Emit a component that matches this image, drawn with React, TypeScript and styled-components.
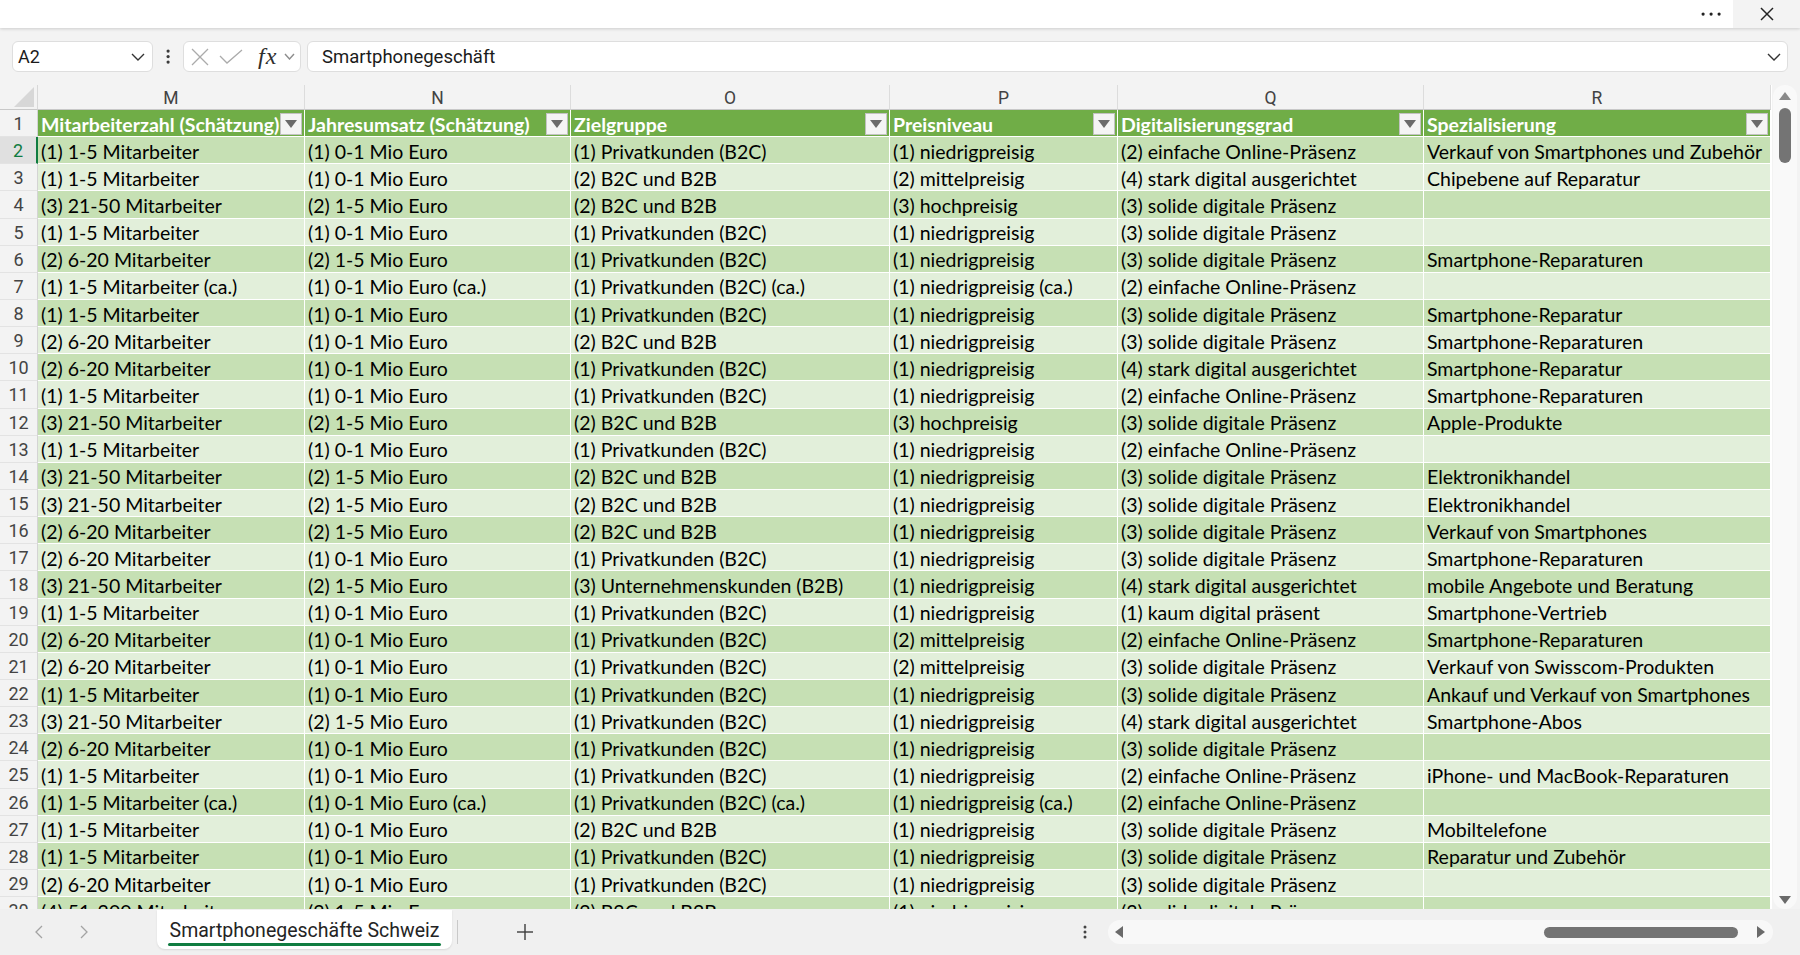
import React from "react";
import styled, { createGlobalStyle } from "styled-components";

const LETTERS = ["M", "N", "O", "P", "Q", "R"];
const HEADINGS = [
  "Mitarbeiterzahl (Schätzung)",
  "Jahresumsatz (Schätzung)",
  "Zielgruppe",
  "Preisniveau",
  "Digitalisierungsgrad",
  "Spezialisierung",
];

// rows 2..30 of the sheet, columns M..R
const ROWS: string[][] = [
  ["(1) 1-5 Mitarbeiter", "(1) 0-1 Mio Euro", "(1) Privatkunden (B2C)", "(1) niedrigpreisig", "(2) einfache Online-Präsenz", "Verkauf von Smartphones und Zubehör"],
  ["(1) 1-5 Mitarbeiter", "(1) 0-1 Mio Euro", "(2) B2C und B2B", "(2) mittelpreisig", "(4) stark digital ausgerichtet", "Chipebene auf Reparatur"],
  ["(3) 21-50 Mitarbeiter", "(2) 1-5 Mio Euro", "(2) B2C und B2B", "(3) hochpreisig", "(3) solide digitale Präsenz", ""],
  ["(1) 1-5 Mitarbeiter", "(1) 0-1 Mio Euro", "(1) Privatkunden (B2C)", "(1) niedrigpreisig", "(3) solide digitale Präsenz", ""],
  ["(2) 6-20 Mitarbeiter", "(2) 1-5 Mio Euro", "(1) Privatkunden (B2C)", "(1) niedrigpreisig", "(3) solide digitale Präsenz", "Smartphone-Reparaturen"],
  ["(1) 1-5 Mitarbeiter (ca.)", "(1) 0-1 Mio Euro (ca.)", "(1) Privatkunden (B2C) (ca.)", "(1) niedrigpreisig (ca.)", "(2) einfache Online-Präsenz", ""],
  ["(1) 1-5 Mitarbeiter", "(1) 0-1 Mio Euro", "(1) Privatkunden (B2C)", "(1) niedrigpreisig", "(3) solide digitale Präsenz", "Smartphone-Reparatur"],
  ["(2) 6-20 Mitarbeiter", "(1) 0-1 Mio Euro", "(2) B2C und B2B", "(1) niedrigpreisig", "(3) solide digitale Präsenz", "Smartphone-Reparaturen"],
  ["(2) 6-20 Mitarbeiter", "(1) 0-1 Mio Euro", "(1) Privatkunden (B2C)", "(1) niedrigpreisig", "(4) stark digital ausgerichtet", "Smartphone-Reparatur"],
  ["(1) 1-5 Mitarbeiter", "(1) 0-1 Mio Euro", "(1) Privatkunden (B2C)", "(1) niedrigpreisig", "(2) einfache Online-Präsenz", "Smartphone-Reparaturen"],
  ["(3) 21-50 Mitarbeiter", "(2) 1-5 Mio Euro", "(2) B2C und B2B", "(3) hochpreisig", "(3) solide digitale Präsenz", "Apple-Produkte"],
  ["(1) 1-5 Mitarbeiter", "(1) 0-1 Mio Euro", "(1) Privatkunden (B2C)", "(1) niedrigpreisig", "(2) einfache Online-Präsenz", ""],
  ["(3) 21-50 Mitarbeiter", "(2) 1-5 Mio Euro", "(2) B2C und B2B", "(1) niedrigpreisig", "(3) solide digitale Präsenz", "Elektronikhandel"],
  ["(3) 21-50 Mitarbeiter", "(2) 1-5 Mio Euro", "(2) B2C und B2B", "(1) niedrigpreisig", "(3) solide digitale Präsenz", "Elektronikhandel"],
  ["(2) 6-20 Mitarbeiter", "(2) 1-5 Mio Euro", "(2) B2C und B2B", "(1) niedrigpreisig", "(3) solide digitale Präsenz", "Verkauf von Smartphones"],
  ["(2) 6-20 Mitarbeiter", "(1) 0-1 Mio Euro", "(1) Privatkunden (B2C)", "(1) niedrigpreisig", "(3) solide digitale Präsenz", "Smartphone-Reparaturen"],
  ["(3) 21-50 Mitarbeiter", "(2) 1-5 Mio Euro", "(3) Unternehmenskunden (B2B)", "(1) niedrigpreisig", "(4) stark digital ausgerichtet", "mobile Angebote und Beratung"],
  ["(1) 1-5 Mitarbeiter", "(1) 0-1 Mio Euro", "(1) Privatkunden (B2C)", "(1) niedrigpreisig", "(1) kaum digital präsent", "Smartphone-Vertrieb"],
  ["(2) 6-20 Mitarbeiter", "(1) 0-1 Mio Euro", "(1) Privatkunden (B2C)", "(2) mittelpreisig", "(2) einfache Online-Präsenz", "Smartphone-Reparaturen"],
  ["(2) 6-20 Mitarbeiter", "(1) 0-1 Mio Euro", "(1) Privatkunden (B2C)", "(2) mittelpreisig", "(3) solide digitale Präsenz", "Verkauf von Swisscom-Produkten"],
  ["(1) 1-5 Mitarbeiter", "(1) 0-1 Mio Euro", "(1) Privatkunden (B2C)", "(1) niedrigpreisig", "(3) solide digitale Präsenz", "Ankauf und Verkauf von Smartphones"],
  ["(3) 21-50 Mitarbeiter", "(2) 1-5 Mio Euro", "(1) Privatkunden (B2C)", "(1) niedrigpreisig", "(4) stark digital ausgerichtet", "Smartphone-Abos"],
  ["(2) 6-20 Mitarbeiter", "(1) 0-1 Mio Euro", "(1) Privatkunden (B2C)", "(1) niedrigpreisig", "(3) solide digitale Präsenz", ""],
  ["(1) 1-5 Mitarbeiter", "(1) 0-1 Mio Euro", "(1) Privatkunden (B2C)", "(1) niedrigpreisig", "(2) einfache Online-Präsenz", "iPhone- und MacBook-Reparaturen"],
  ["(1) 1-5 Mitarbeiter (ca.)", "(1) 0-1 Mio Euro (ca.)", "(1) Privatkunden (B2C) (ca.)", "(1) niedrigpreisig (ca.)", "(2) einfache Online-Präsenz", ""],
  ["(1) 1-5 Mitarbeiter", "(1) 0-1 Mio Euro", "(2) B2C und B2B", "(1) niedrigpreisig", "(3) solide digitale Präsenz", "Mobiltelefone"],
  ["(1) 1-5 Mitarbeiter", "(1) 0-1 Mio Euro", "(1) Privatkunden (B2C)", "(1) niedrigpreisig", "(3) solide digitale Präsenz", "Reparatur und Zubehör"],
  ["(2) 6-20 Mitarbeiter", "(1) 0-1 Mio Euro", "(1) Privatkunden (B2C)", "(1) niedrigpreisig", "(3) solide digitale Präsenz", ""],
  ["(4) 51-200 Mitarbeiter", "(2) 1-5 Mio Euro", "(2) B2C und B2B", "(1) niedrigpreisig", "(3) solide digitale Präsenz", ""],
];

const GlobalStyle = createGlobalStyle`
  * { box-sizing: border-box; }
  html, body { margin: 0; padding: 0; }
  body {
    width: 1800px;
    height: 955px;
    overflow: hidden;
    background: #f3f3f3;
    font-family: Roboto, "Open Sans", sans-serif;
    color: #242424;
  }
`;

const Window = styled.div`
  width: 1800px;
  height: 955px;
  display: flex;
  flex-direction: column;
  background: #f3f3f3;
`;

/* ---------- title bar ---------- */

const TitleBar = styled.header`
  height: 28px;
  flex: none;
  background: #fff;
  box-shadow: 0 1px 3px rgba(0, 0, 0, 0.16);
  display: flex;
  justify-content: flex-end;
  position: relative;
  z-index: 2;
`;

const TitleButton = styled.div<{ $shade?: boolean }>`
  width: ${(p) => (p.$shade ? 67 : 44)}px;
  height: 100%;
  background: ${(p) => (p.$shade ? "#f3f3f3" : "transparent")};
  display: flex;
  align-items: center;
  justify-content: center;
`;

/* ---------- formula bar ---------- */

const FormulaRow = styled.div`
  height: 57px;
  flex: none;
  display: flex;
  align-items: flex-start;
  padding: 13px 12px 0 12px;
`;

const Box = styled.div`
  height: 31px;
  background: #fff;
  border: 1px solid #dedede;
  border-radius: 6px;
  display: flex;
  align-items: center;
`;

const NameBox = styled(Box)`
  width: 141px;
  justify-content: space-between;
  padding: 0 7px 0 5px;
  font-size: 18px;
  color: #1b1b1b;
`;

const Grip = styled.div`
  width: 30px;
  height: 31px;
  display: flex;
  align-items: center;
  justify-content: center;
`;

const FxGroup = styled(Box)`
  width: 118px;
  padding-left: 7px;
  gap: 10px;
`;

const FxLabel = styled.span`
  font-family: "Liberation Serif", serif;
  font-style: italic;
  font-size: 24px;
  color: #2e2e2e;
  margin-left: 5px;
  margin-right: -3px;
  letter-spacing: 1px;
`;

const FormulaInput = styled(Box)`
  flex: 1;
  margin-left: 6px;
  justify-content: space-between;
  padding: 0 6px 0 14px;
  font-size: 18.5px;
  color: #1b1b1b;
`;

/* ---------- sheet ---------- */

const TEMPLATE = "38px 267px 266px 319px 228px 306px 347px";

const Workspace = styled.div`
  flex: 1;
  min-height: 0;
  display: flex;
`;

const Sheet = styled.div`
  width: 1772px;
  overflow: hidden;
  background: #fff;
  display: flex;
  flex-direction: column;
`;

const GridRow = styled.div<{ $height: number }>`
  display: grid;
  grid-template-columns: ${TEMPLATE};
  height: ${(p) => p.$height}px;
  flex: none;
`;

const Corner = styled.div`
  background: #f3f3f3;
  border-right: 1px solid #d8d8d8;
  border-bottom: 1px solid #c8c8c8;
  position: relative;
`;

const ColumnLetter = styled.div`
  background: #f3f3f3;
  border-right: 1px solid #dcdcdc;
  border-bottom: 1px solid #c8c8c8;
  display: flex;
  align-items: center;
  justify-content: center;
  padding-top: 1px;
  font-size: 17.5px;
  color: #424242;
`;

const RowNumber = styled.div<{ $selected?: boolean }>`
  background: ${(p) => (p.$selected ? "#e0e0e0" : "#f3f3f3")};
  color: ${(p) => (p.$selected ? "#107c41" : "#444")};
  border-bottom: 1px solid #e3e3e3;
  border-right: ${(p) => (p.$selected ? "2px solid #107c41" : "1px solid #d4d4d4")};
  display: flex;
  align-items: center;
  justify-content: center;
  padding-top: 1px;
  font-size: 18px;
`;

const BANDS = {
  head: "#70ad47",
  dark: "#c6e0b4",
  light: "#e2efda",
};

const Cell = styled.div<{ $band: keyof typeof BANDS }>`
  background: ${(p) => BANDS[p.$band]};
  border-right: 1px solid #fff;
  border-bottom: 1px solid #fff;
  padding: 2px 2px 0 3px;
  display: flex;
  align-items: center;
  justify-content: space-between;
  font-family: Lato, "Open Sans", sans-serif;
  font-size: 19.5px;
  font-weight: ${(p) => (p.$band === "head" ? 700 : 400)};
  color: ${(p) => (p.$band === "head" ? "#fff" : "#000")};
  white-space: nowrap;
  overflow: hidden;
`;

const FilterButton = styled.div`
  width: 22px;
  height: 22px;
  flex: none;
  background: #f4f4f4;
  border: 1px solid #c2c2c2;
  display: flex;
  align-items: center;
  justify-content: center;
`;

/* ---------- scrollbars ---------- */

const VScroll = styled.div`
  width: 28px;
  flex: none;
  padding: 0 3px 0 1px;
`;

const VTrack = styled.div`
  height: 100%;
  background: #f9f9f9;
  border-radius: 12px;
  display: flex;
  flex-direction: column;
  align-items: center;
  padding: 7px 0 5px;
`;

const VThumb = styled.div`
  width: 12px;
  height: 55px;
  margin-top: 8px;
  border-radius: 6px;
  background: #747474;
`;

const Spacer = styled.div`
  flex: 1;
`;

/* ---------- sheet tabs ---------- */

const TabBar = styled.footer`
  height: 46px;
  flex: none;
  background: #f0f0f0;
  display: flex;
  align-items: center;
  padding-left: 16px;
`;

const NavButton = styled.div`
  width: 45px;
  height: 30px;
  display: flex;
  align-items: center;
  justify-content: center;
`;

const SheetTab = styled.div`
  align-self: flex-start;
  margin: 1px 0 0 51px;
  width: 295px;
  height: 39px;
  background: #fff;
  border-radius: 0 0 8px 8px;
  box-shadow: 0 1px 2px rgba(0, 0, 0, 0.1);
  display: flex;
  flex-direction: column;
  align-items: center;
  justify-content: center;
  padding-top: 5px;
  font-size: 19.5px;
  color: #242424;
`;

const TabUnderline = styled.span`
  width: 273px;
  height: 3px;
  margin-top: 1px;
  border-radius: 2px;
  background: #107c41;
`;

const Divider = styled.div`
  width: 1px;
  height: 24px;
  margin-left: 5px;
  background: #c9c9c9;
`;

const AddButton = styled.div`
  width: 44px;
  height: 30px;
  margin-left: 45px;
  display: flex;
  align-items: center;
  justify-content: center;
`;

const MoreButton = styled.div`
  width: 20px;
  height: 24px;
  margin-right: 13px;
  display: flex;
  align-items: center;
  justify-content: center;
`;

const HTrack = styled.div`
  width: 665px;
  height: 24px;
  margin-right: 27px;
  background: #f8f8f8;
  border-radius: 12px;
  display: flex;
  align-items: center;
  padding: 0 8px 0 7px;
`;

const HThumb = styled.div`
  width: 194px;
  height: 11px;
  margin-right: 19px;
  border-radius: 6px;
  background: #747474;
`;

/* ---------- drawings ---------- */

const Chevron = ({ w = 14, h = 8, color = "#333" }: { w?: number; h?: number; color?: string }) => (
  <svg width={w} height={h} viewBox={`0 0 ${w} ${h}`}>
    <polyline points={`1,1 ${w / 2},${h - 1} ${w - 1},1`} fill="none" stroke={color} strokeWidth="1.4" />
  </svg>
);

const Dots = ({ vertical, color = "#444", r = 1.7, step = 6 }: { vertical?: boolean; color?: string; r?: number; step?: number }) => {
  const len = step * 2 + r * 2 + 1;
  const c = [r + 0.5, r + 0.5 + step, r + 0.5 + step * 2];
  return vertical ? (
    <svg width={r * 2 + 1} height={len}>
      {c.map((y) => <circle key={y} cx={r + 0.5} cy={y} r={r} fill={color} />)}
    </svg>
  ) : (
    <svg width={len} height={r * 2 + 1}>
      {c.map((x) => <circle key={x} cx={x} cy={r + 0.5} r={r} fill={color} />)}
    </svg>
  );
};

const Cross = ({ size, color, width }: { size: number; color: string; width: number }) => (
  <svg width={size} height={size} viewBox={`0 0 ${size} ${size}`}>
    <line x1="1" y1="1" x2={size - 1} y2={size - 1} stroke={color} strokeWidth={width} />
    <line x1={size - 1} y1="1" x2="1" y2={size - 1} stroke={color} strokeWidth={width} />
  </svg>
);

const Tick = () => (
  <svg width="24" height="15" viewBox="0 0 24 15">
    <polyline points="1,7 8,14 23,1" fill="none" stroke="#ababab" strokeWidth="1.3" />
  </svg>
);

const Triangle = ({ dir, color }: { dir: "up" | "down" | "left" | "right"; color: string }) => {
  const pts = {
    up: "6,0 12,8 0,8",
    down: "0,0 12,0 6,8",
    left: "8,0 8,12 0,6",
    right: "0,0 8,6 0,12",
  }[dir];
  const horiz = dir === "left" || dir === "right";
  return (
    <svg width={horiz ? 8 : 12} height={horiz ? 12 : 8}>
      <polygon points={pts} fill={color} />
    </svg>
  );
};

const Arrow = ({ dir }: { dir: "left" | "right" }) => (
  <svg width="8" height="14" viewBox="0 0 8 14">
    <polyline
      points={dir === "left" ? "7,1 1,7 7,13" : "1,1 7,7 1,13"}
      fill="none"
      stroke="#a3a3a3"
      strokeWidth="1.3"
    />
  </svg>
);

const PlusSign = () => (
  <svg width="16" height="16" viewBox="0 0 16 16">
    <line x1="8" y1="0" x2="8" y2="16" stroke="#3d3d3d" strokeWidth="1.4" />
    <line x1="0" y1="8" x2="16" y2="8" stroke="#3d3d3d" strokeWidth="1.4" />
  </svg>
);

const CornerMark = styled.svg`
  position: absolute;
  right: 3px;
  bottom: 2px;
`;

/* ---------- app ---------- */

export default function App() {
  return (
    <Window>
      <GlobalStyle />
      <TitleBar>
        <TitleButton>
          <Dots color="#222" r={1.6} step={8} />
        </TitleButton>
        <TitleButton $shade>
          <Cross size={14} color="#222" width={1.5} />
        </TitleButton>
      </TitleBar>

      <FormulaRow>
        <NameBox>
          <span>A2</span>
          <Chevron />
        </NameBox>
        <Grip>
          <Dots vertical color="#3a3a3a" r={1.6} step={5.5} />
        </Grip>
        <FxGroup>
          <Cross size={18} color="#ababab" width={1.3} />
          <Tick />
          <FxLabel>fx</FxLabel>
          <Chevron w={11} h={7} color="#8d8d8d" />
        </FxGroup>
        <FormulaInput>
          <span>Smartphonegeschäft</span>
          <Chevron />
        </FormulaInput>
      </FormulaRow>

      <Workspace>
        <Sheet>
          <GridRow $height={25}>
            <Corner>
              <CornerMark width="20" height="20">
                <polygon points="20,0 20,20 0,20" fill="#d7d7d7" />
              </CornerMark>
            </Corner>
            {LETTERS.map((l) => (
              <ColumnLetter key={l}>{l}</ColumnLetter>
            ))}
          </GridRow>

          <GridRow $height={27.15}>
            <RowNumber>1</RowNumber>
            {HEADINGS.map((h) => (
              <Cell key={h} $band="head">
                <span>{h}</span>
                <FilterButton>
                  <Triangle dir="down" color="#6a6a6a" />
                </FilterButton>
              </Cell>
            ))}
          </GridRow>

          {ROWS.map((row, i) => (
            <GridRow key={i} $height={27.15}>
              <RowNumber $selected={i === 0}>{i + 2}</RowNumber>
              {row.map((value, j) => (
                <Cell key={j} $band={i % 2 === 0 ? "dark" : "light"}>
                  {value}
                </Cell>
              ))}
            </GridRow>
          ))}
        </Sheet>

        <VScroll>
          <VTrack>
            <Triangle dir="up" color="#8a8a8a" />
            <VThumb />
            <Spacer />
            <Triangle dir="down" color="#6a6a6a" />
          </VTrack>
        </VScroll>
      </Workspace>

      <TabBar>
        <NavButton>
          <Arrow dir="left" />
        </NavButton>
        <NavButton>
          <Arrow dir="right" />
        </NavButton>
        <SheetTab>
          <span>Smartphonegeschäfte Schweiz</span>
          <TabUnderline />
        </SheetTab>
        <Divider />
        <AddButton>
          <PlusSign />
        </AddButton>
        <Spacer />
        <MoreButton>
          <Dots vertical color="#444" r={1.5} step={5} />
        </MoreButton>
        <HTrack>
          <Triangle dir="left" color="#6a6a6a" />
          <Spacer />
          <HThumb />
          <Triangle dir="right" color="#6a6a6a" />
        </HTrack>
      </TabBar>
    </Window>
  );
}
